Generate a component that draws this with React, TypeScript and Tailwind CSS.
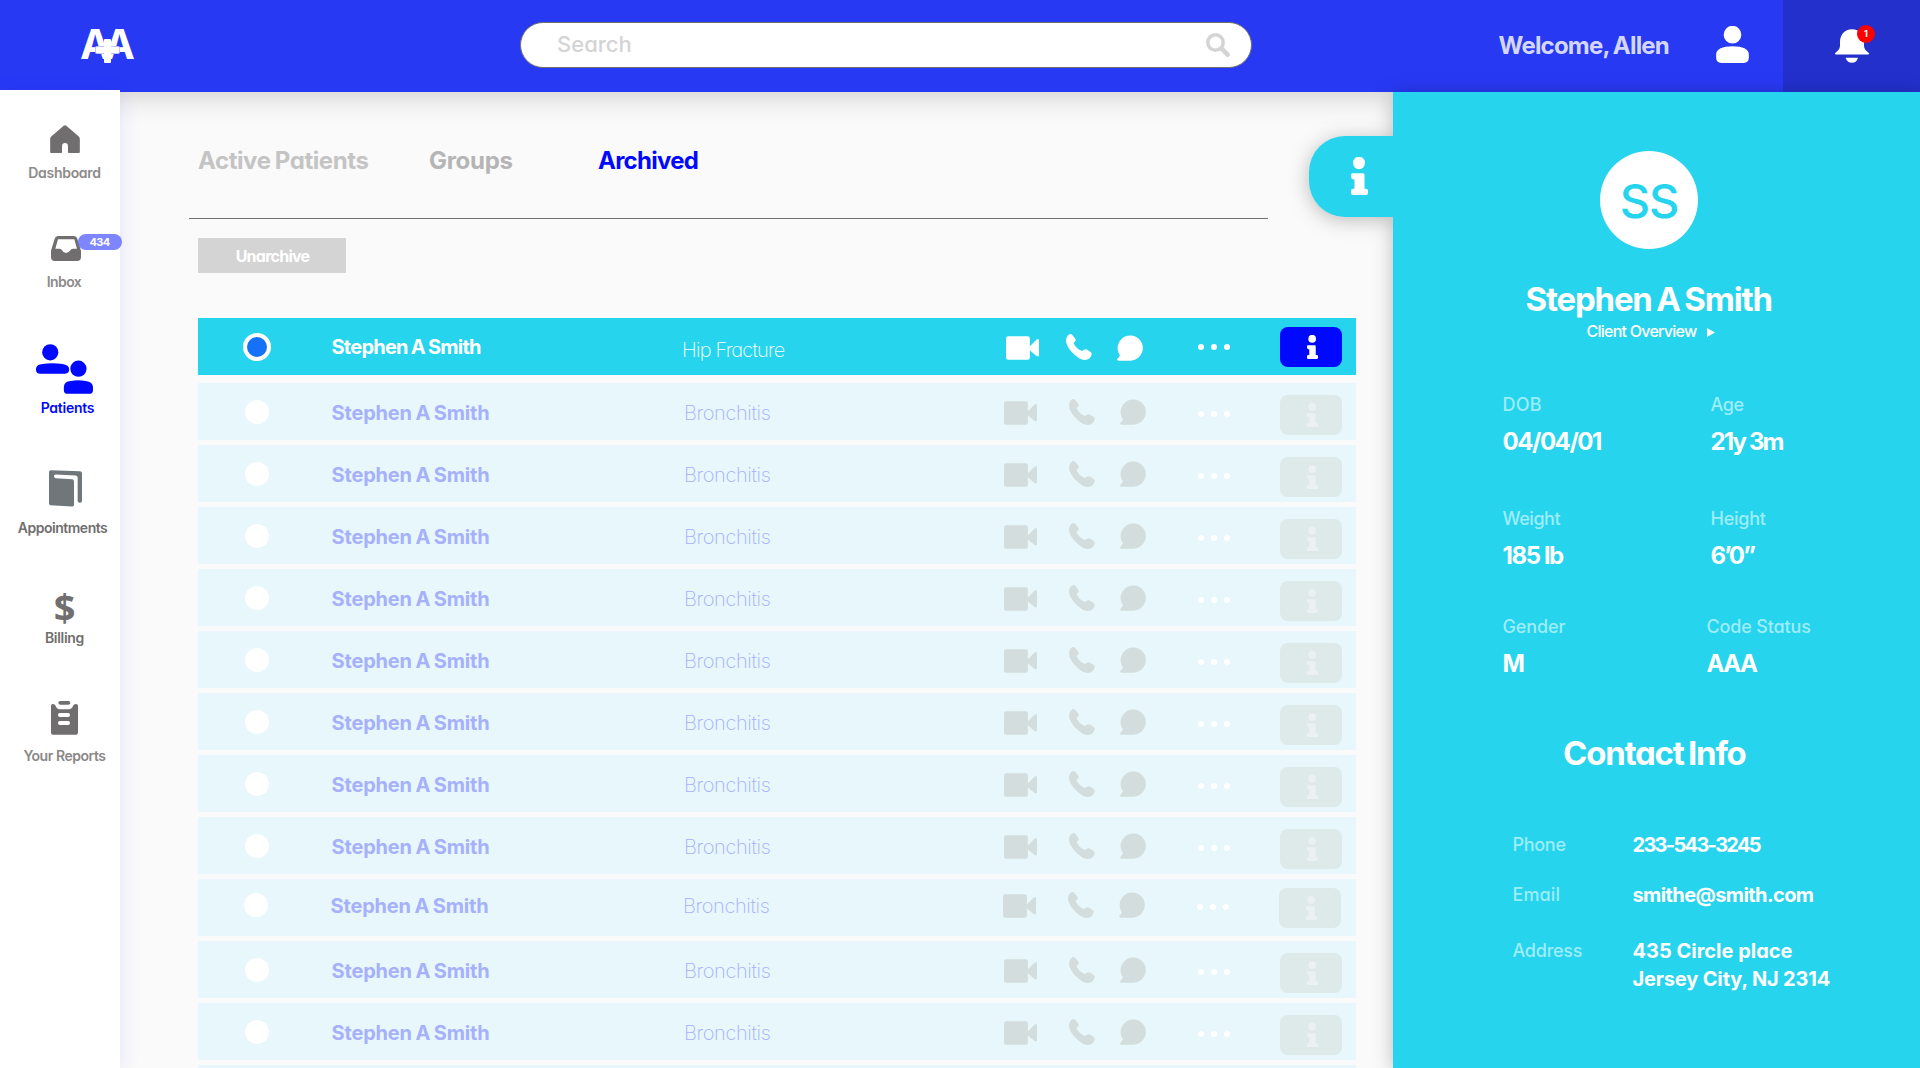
import React from "react";
import clsx from "clsx";

type IconProps = { className?: string };

const InfoIcon = ({ className }: IconProps) => (
  <svg viewBox="0 0 34 73" preserveAspectRatio="none" fill="currentColor" className={className}>
    <circle cx="16" cy="11.5" r="12" />
    <path d="M3 31H24Q27 31 27 34V61H30Q34 61 34 65V69Q34 73 30 73H4Q0 73 0 69V65Q0 61 4 61H7V43H4Q0 42 0 38V34Q0 31 3 31Z" />
  </svg>
);

const VideoIcon = ({ className }: IconProps) => (
  <svg viewBox="0 0 98 70" fill="currentColor" className={className}>
    <rect width="71" height="70" rx="7" />
    <path d="M70 31L91 10Q98 6 98 13V56Q98 62 91 59L70 42Z" />
  </svg>
);

const PhoneIcon = ({ className }: IconProps) => (
  <svg viewBox="0 0 79 79" fill="currentColor" className={className}>
    <path d="M17 1L28 14Q31 18 28 22L23 27Q30 44 49 52L54 48Q58 45 63 47L75 55Q80 59 77 65Q71 79 55 79Q38 77 16 53Q-1 33 0 19Q2 4 11 1Q14 -1 17 1Z" />
  </svg>
);

const ChatIcon = ({ className }: IconProps) => (
  <svg viewBox="0 0 79 77" fill="currentColor" className={className}>
    <path d="M41 77H4Q-1 76 1 71Q6 66 9 61A38.3 38.3 0 1 1 41 77Z" />
  </svg>
);

const SearchIcon = ({ className }: IconProps) => (
  <svg viewBox="0 0 24 24" fill="none" stroke="currentColor" className={className}>
    <circle cx="9.5" cy="9.5" r="7.7" strokeWidth="3.5" />
    <path d="M15.6 15.6L21.6 21.6" strokeWidth="4.6" strokeLinecap="round" />
  </svg>
);

const UserIcon = ({ className }: IconProps) => (
  <svg viewBox="0 0 98 111" fill="currentColor" className={className}>
    <circle cx="49" cy="26" r="26.5" />
    <path d="M0 84Q2 62 49 61Q96 62 98 84V94Q98 111 82 111H16Q0 111 0 94Z" />
  </svg>
);

const BellIcon = ({ className }: IconProps) => (
  <svg viewBox="0 0 102 101" fill="currentColor" className={className}>
    <path d="M51 0C28 0 15 18 15 38V50C15 60 8 66 0 72Q-1 76 3 76H99Q103 76 102 72C94 66 87 60 87 50V38C87 18 74 0 51 0Z" />
    <path d="M32 86H69Q65 101 51 101Q36 101 32 86Z" />
  </svg>
);

const HomeIcon = ({ className }: IconProps) => (
  <svg viewBox="0 0 90 85" fill="currentColor" className={className}>
    <path d="M41 2Q45 -1 49 2L86 34Q90 37 90 42V82Q90 85 87 85H57Q54 85 54 82V64Q54 55 45 55Q36 55 36 64V82Q36 85 33 85H3Q0 85 0 82V42Q0 37 4 34Z" />
  </svg>
);

const InboxIcon = ({ className }: IconProps) => (
  <svg viewBox="0 0 90 75" fill="currentColor" fillRule="evenodd" className={className}>
    <path d="M21 0H69Q77 0 79 8L90 44V63Q90 75 78 75H12Q0 75 0 63V44L11 8Q13 0 21 0ZM21 10L13 38H26Q31 39 33 43Q37 51 45 51Q53 51 58 43Q60 39 66 38H78L70 10Z" />
  </svg>
);

const PatientsIcon = ({ className }: IconProps) => (
  <svg viewBox="0 0 172 150" fill="currentColor" className={className}>
    <circle cx="43" cy="24.5" r="24.5" />
    <path d="M0 78Q-2 62 20 60Q48 56 80 60Q100 63 100 76Q100 89 88 89H13Q0 89 0 78Z" />
    <circle cx="128" cy="74" r="24.5" />
    <path d="M84 130Q84 112 105 111Q128 107 150 111Q172 114 172 130V138Q172 150 160 150H96Q84 150 84 138Z" />
  </svg>
);

const BookIcon = ({ className }: IconProps) => (
  <svg viewBox="0 0 99 110" fill="currentColor" className={className}>
    <path d="M6 0L93 3Q99 3 99 9V93Q98 98 91 98Q86 97 86 92V22Q86 17 80 16L20 13Q15 13 15 18Q15 23 20 24L70 27Q75 28 75 34V104Q75 110 69 109L4 105Q0 104 0 100V5Q1 0 6 0Z" />
  </svg>
);

const ClipboardIcon = ({ className }: IconProps) => (
  <svg viewBox="0 0 81 102" fill="currentColor" className={className}>
    <rect x="22" width="36" height="11" rx="5.5" />
    <path d="M5 9Q12 9 14 15Q16 24 24 25H56Q64 24 66 15Q68 9 75 9Q81 9 81 15V95Q81 101 75 101H6Q0 101 0 95V15Q0 9 5 9Z" />
    <rect x="21" y="36" width="36" height="12" rx="6" fill="#fff" />
    <rect x="21" y="60" width="36" height="12" rx="6" fill="#fff" />
  </svg>
);

const Logo = () => (
  <div className="relative h-[34px] w-[54px] text-white">
    <div className="text-[41px] leading-[30px] font-bold tracking-[-7px]">AA</div>
    <span className="absolute top-[17px] left-[15px] h-[8px] w-[25px] rounded-[2px] border border-[#2839f4]/30 bg-white" />
    <span className="absolute top-[10px] left-[24px] h-[24px] w-[7px] rounded-[1px] bg-white" />
  </div>
);

function Header() {
  return (
    <header className="flex h-[92px] shrink-0 items-start bg-[#2839f4] shadow-[0_3px_30px_rgba(0,0,0,0.19)]">
      <div className="w-[520px] pt-[29px] pl-[80px]">
        <Logo />
      </div>
      <div className="mt-[22px] flex h-[46px] w-[732px] items-center justify-between rounded-full border border-[#707070] bg-white pr-[21px] pl-[36px] text-[#d4d4d4]">
        <span className="-mt-[2px] text-[22px] leading-[28px] font-medium">Search</span>
        <SearchIcon className="h-6 w-6" />
      </div>
      <span className="mt-[30px] ml-[246.5px] w-[217.5px] text-[24px] leading-[32px] font-bold tracking-[-0.8px] [word-spacing:-1px] whitespace-nowrap text-[#d4d7fd]">
        Welcome, Allen
      </span>
      <UserIcon className="mt-[26px] h-[37px] w-[33px] text-white" />
      <div className="relative ml-auto h-full w-[137px] bg-[#2330cc] pt-[29px] pl-[52px] text-white">
        <BellIcon className="h-[34px] w-[34px]" />
        <span className="absolute top-[25px] left-[74px] flex h-[18px] w-[18px] items-center justify-center rounded-full bg-[#ff0000] text-[9px] font-bold">
          1
        </span>
      </div>
    </header>
  );
}

const navLabel = "text-[14px] leading-[20px] font-semibold whitespace-nowrap";

function Sidebar() {
  return (
    <nav className="-mt-[2px] flex w-[120px] shrink-0 flex-col items-center bg-white pt-[35px] pl-[9px] text-[#706e6e] shadow-[0_3px_20px_rgba(0,0,255,0.1)]">
      <HomeIcon className="h-[28px] w-[30px]" />
      <span className={clsx(navLabel, "mt-[10px] tracking-[-0.3px] text-[#8c8a8a]")}>Dashboard</span>

      <div className="relative mt-[53px] ml-[2px]">
        <InboxIcon className="h-[25px] w-[30px]" />
        <span className="absolute -top-[2px] left-[27px] flex h-4 w-[44px] items-center justify-center rounded-full bg-[#6670ff]/85 text-[11px] font-bold tracking-[-0.7px] text-white">
          434
        </span>
      </div>
      <span className={clsx(navLabel, "mt-[11px] -ml-px tracking-[-0.6px] text-[#8c8a8a]")}>Inbox</span>

      <PatientsIcon className="mt-[52px] h-[50px] w-[57px] text-[#0008ff]" />
      <span className={clsx(navLabel, "mt-[4px] ml-[6px] tracking-[-0.25px] text-[#0008ff]")}>Patients</span>

      <BookIcon className="mt-[52px] ml-[2px] h-[37px] w-[33px] text-[#70777a]" />
      <span className={clsx(navLabel, "mt-[11px] -ml-[4px] tracking-[-0.48px]")}>Appointments</span>

      <span className="mt-[53px] h-[32px] font-['Open_Sans'] text-[38px] leading-[32px] font-bold">$</span>
      <span className={clsx(navLabel, "mt-[5px] tracking-[-0.3px]")}>Billing</span>

      <ClipboardIcon className="mt-[53px] h-[34px] w-[27px]" />
      <span className={clsx(navLabel, "mt-[11px] tracking-[-0.45px] text-[#8a8888]")}>Your Reports</span>
    </nav>
  );
}

type RowProps = { diagnosis: string; active?: boolean; nudged?: boolean };

function PatientRow({ diagnosis, active = false, nudged = false }: RowProps) {
  return (
    <div className={clsx("h-[57px] w-[1158px] shrink-0", active ? "bg-[#26d4ed] text-white" : "bg-[#e7f7fb] text-[#d4dddd]")}>
      <div className={clsx("flex items-start", nudged && "relative -top-[3px] -left-px")}>
        <div className={clsx("w-[133.5px]", active ? "pt-[15px] pl-[45px]" : "pt-[16.5px] pl-[47px]")}>
          <div
            className={clsx(
              "rounded-full",
              active ? "h-[28px] w-[28px] border-4 border-white bg-[#1572f7]" : "h-[24px] w-[24px] bg-white",
            )}
          />
        </div>
        <div
          className={clsx(
            "text-[20px] leading-[28px] font-bold [word-spacing:-1px] whitespace-nowrap",
            active ? "mt-[15px] w-[350.5px] tracking-[-0.75px]" : "mt-[16px] w-[352.5px] tracking-[-0.17px] text-[#a6b0fb]",
          )}
        >
          Stephen A Smith
        </div>
        <div
          className={clsx(
            "text-[20px] leading-[28px] font-extralight whitespace-nowrap",
            active ? "mt-[18px] w-[324px] tracking-[-0.8px]" : "mt-[16px] w-[320px] tracking-[-0.36px] text-[#a6b0fb]",
          )}
        >
          {diagnosis}
        </div>
        <VideoIcon className="mt-[18px] h-[24px] w-[33px]" />
        <PhoneIcon className={clsx("h-[26px] w-[26px]", active ? "mt-[16px] ml-[26.5px]" : "mt-[16px] ml-[32px]")} />
        <ChatIcon className={clsx("h-[26px] w-[26px]", active ? "mt-[17px] ml-[25.5px]" : "mt-[16px] ml-[25px]")} />
        <div className={clsx("flex gap-[7px] text-white", active ? "mt-[26px] ml-[55px]" : "mt-[28px] ml-[52px]")}>
          <span className="h-[6px] w-[6px] rounded-full bg-white" />
          <span className="h-[6px] w-[6px] rounded-full bg-white" />
          <span className="h-[6px] w-[6px] rounded-full bg-white" />
        </div>
        <div
          className={clsx(
            "ml-[50px] h-[40px] w-[62px] rounded-[8px] pt-[8px] pl-[27px]",
            active ? "mt-[9px] bg-[#0008ff]" : "mt-[11.5px] bg-[#dee9ea] text-[#ebf1f2]",
          )}
        >
          <InfoIcon className="h-[24px] w-[11px]" />
        </div>
      </div>
    </div>
  );
}

const archived = Array.from({ length: 11 }, (_, i) => ({ id: i, diagnosis: "Bronchitis", nudged: i === 8 }));

function Main() {
  return (
    <main className="flex w-[1273px] shrink-0 flex-col pt-[53px]">
      <div className="ml-[78px] flex text-[24px] leading-[32px] font-bold whitespace-nowrap">
        <span className="w-[231px] tracking-[-0.42px] [word-spacing:-1px] text-[#c4c4c4]">Active Patients</span>
        <span className="w-[169px] tracking-[-0.3px] text-[#b5b5b5]">Groups</span>
        <span className="tracking-[-0.75px] text-[#0008ff]">Archived</span>
      </div>
      <div className="mt-[41px] ml-[69px] h-px w-[1079px] shrink-0 bg-[#707070]" />
      <button className="mt-[19px] ml-[78px] h-[35px] w-[148px] shrink-0 bg-[#d4d4d4] pt-px pl-px text-[16px] font-bold tracking-[-0.75px] text-white">
        Unarchive
      </button>
      <div className="mt-[45px] ml-[78px] flex flex-col gap-[5px]">
        <div className="mb-[3px]">
          <PatientRow diagnosis="Hip Fracture" active />
        </div>
        {archived.map((p) => (
          <PatientRow key={p.id} diagnosis={p.diagnosis} nudged={p.nudged} />
        ))}
        <div className="h-[3px] w-[1158px] bg-[#e7f7fb]" />
      </div>
    </main>
  );
}

type FieldProps = { label: string; value: string; labelClass?: string; valueClass?: string; className?: string };

const Field = ({ label, value, labelClass, valueClass, className }: FieldProps) => (
  <div className={clsx("whitespace-nowrap", className)}>
    <div className={clsx("text-[18px] leading-[24px] font-medium text-[#9eedf8]", labelClass)}>{label}</div>
    <div className={clsx("mt-[9px] text-[24px] leading-[32px] font-bold text-white", valueClass)}>{value}</div>
  </div>
);

type ContactProps = { label: string; labelClass: string; className?: string; children: React.ReactNode };

const Contact = ({ label, labelClass, className, children }: ContactProps) => (
  <div className={clsx("flex leading-[28px] whitespace-nowrap", className)}>
    <span className={clsx("w-[120px] text-[18px] font-medium text-[#9eedf8]", labelClass)}>{label}</span>
    <span className="text-[20px] font-bold">{children}</span>
  </div>
);

function DetailsPanel() {
  return (
    <aside className="relative w-[527px] shrink-0 bg-[#26d4ed] pt-[59px] text-white drop-shadow-[0_3px_10px_rgba(0,0,0,0.25)]">
      <div className="absolute top-[44px] -left-[84px] h-[81px] w-[85px] rounded-l-[36px] bg-[#26d4ed] pt-[21px] pl-[42px]">
        <InfoIcon className="h-[38px] w-[17px]" />
      </div>
      <div className="ml-[207px] flex h-[98px] w-[98px] items-center justify-center rounded-full bg-white text-[47px] font-medium tracking-[-1px] text-[#26d4ed]">
        <span className="pt-[2px]">SS</span>
      </div>
      <h1 className="mt-[30px] ml-[132.5px] text-[33px] leading-[40px] font-bold tracking-[-1.2px] [word-spacing:-2px] whitespace-nowrap">
        Stephen A Smith
      </h1>
      <div className="mt-[2px] ml-[193.5px] flex items-center text-[16px] leading-[20px] font-medium tracking-[-0.75px] whitespace-nowrap">
        <span className="w-[120.5px]">Client Overview</span>
        <svg viewBox="0 0 8 9" className="mt-[3px] h-[9px] w-[8px]" fill="currentColor">
          <path d="M0 0L8 4.5L0 9Z" />
        </svg>
      </div>

      <div className="mt-[52px] ml-[109.5px] grid grid-cols-[208px_auto]">
        <Field label="DOB" value="04/04/01" labelClass="tracking-[0.2px]" valueClass="tracking-[-1.45px]" />
        <Field label="Age" value="21y 3m" labelClass="tracking-[-0.35px]" valueClass="tracking-[-1.85px]" />
        <Field label="Weight" value="185 lb" className="mt-[49px]" labelClass="tracking-[-0.45px]" valueClass="tracking-[-1.4px]" />
        <Field label="Height" value="6’0”" className="mt-[49px]" labelClass="tracking-[-0.25px]" valueClass="tracking-[-1.8px]" />
        <Field label="Gender" value="M" className="mt-[43px]" labelClass="tracking-[-0.1px]" />
        <Field label="Code Status" value="AAA" className="mt-[43px] -ml-[4px]" labelClass="tracking-[-0.15px]" valueClass="tracking-[-1.5px]" />
      </div>

      <h2 className="mt-[53px] ml-[170px] text-[33px] leading-[40px] font-bold tracking-[-1.25px] [word-spacing:-2px] whitespace-nowrap">
        Contact Info
      </h2>
      <div className="mt-[58px] ml-[119.5px]">
        <Contact label="Phone" labelClass="tracking-[-0.3px]">
          <span className="tracking-[-1.7px]">233-543-3245</span>
        </Contact>
        <Contact label="Email" labelClass="tracking-[0.1px]" className="mt-[22px]">
          <span className="tracking-[-0.6px]">smithe@smith.com</span>
        </Contact>
        <Contact label="Address" labelClass="tracking-[-0.25px]" className="mt-[28px]">
          <span className="block tracking-[0px]">435 Circle place</span>
          <span className="block tracking-[-0.15px]">Jersey City, NJ 2314</span>
        </Contact>
      </div>
    </aside>
  );
}

export default function App() {
  return (
    <div className="flex h-[1068px] w-[1920px] flex-col overflow-hidden bg-[#fafafa] font-['Inter','Liberation_Sans',sans-serif] [font-feature-settings:'cv11']">
      <Header />
      <div className="flex h-[976px] items-stretch">
        <Sidebar />
        <Main />
        <DetailsPanel />
      </div>
    </div>
  );
}
